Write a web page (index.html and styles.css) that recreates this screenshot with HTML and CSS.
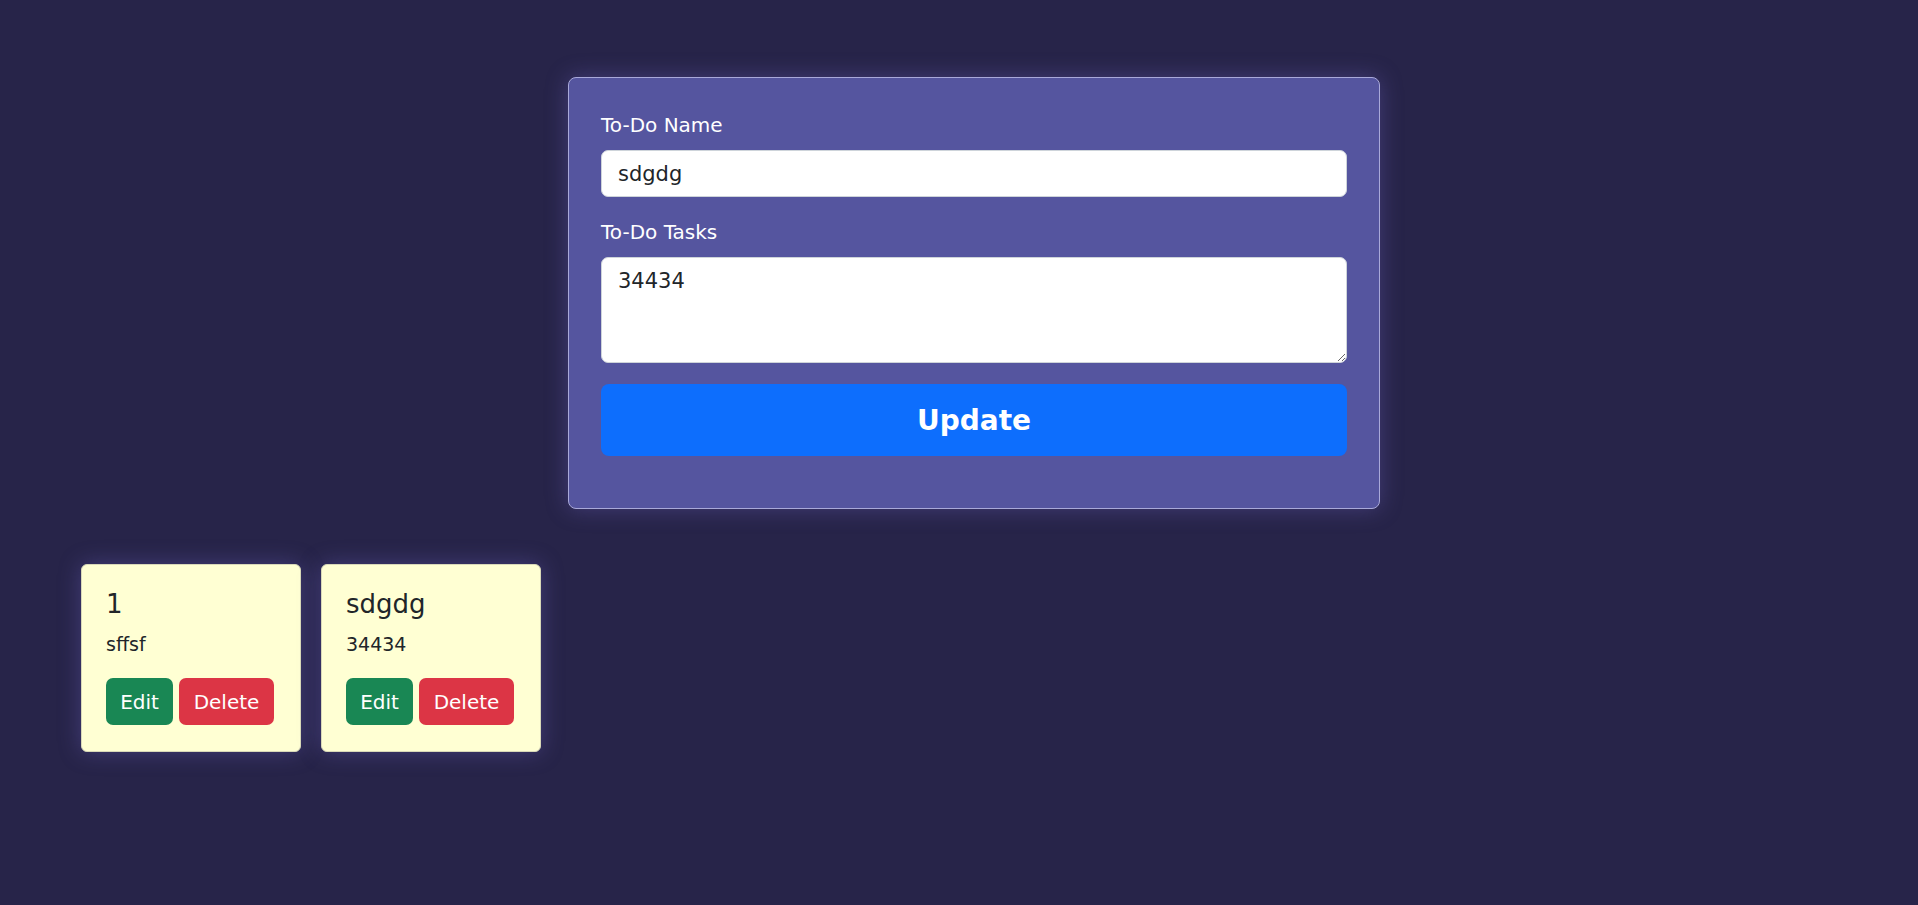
FILE: index.html
```html
<!DOCTYPE html>
<html lang="en">
<head>
<meta charset="utf-8">
<title>To-Do</title>
<link rel="stylesheet" href="styles.css">
</head>
<body>
<main class="page">
  <div class="form-wrap">
    <form class="todo-form">
      <label class="form-label" for="name">To-Do Name</label>
      <input class="form-control" id="name" type="text" value="sdgdg">
      <label class="form-label second" for="tasks">To-Do Tasks</label>
      <textarea class="form-control area" id="tasks">34434</textarea>
      <button type="button" class="btn-update">Update</button>
    </form>
  </div>
  <section class="cards">
    <div class="card">
      <h4 class="card-title">1</h4>
      <p class="card-text">sffsf</p>
      <div class="actions">
        <button type="button" class="btn btn-edit">Edit</button>
        <button type="button" class="btn btn-delete">Delete</button>
      </div>
    </div>
    <div class="card">
      <h4 class="card-title">sdgdg</h4>
      <p class="card-text">34434</p>
      <div class="actions">
        <button type="button" class="btn btn-edit">Edit</button>
        <button type="button" class="btn btn-delete">Delete</button>
      </div>
    </div>
  </section>
</main>
</body>
</html>
```

FILE: styles.css
```css
* { box-sizing: border-box; }
html, body {
  margin: 0;
  padding: 0;
  background: #272449;
  height: 100%;
}
body {
  font-family: "DejaVu Sans", "Open Sans", "Liberation Sans", sans-serif;
  color: #212529;
}
.page {
  padding-top: 77px;
}
.form-wrap {
  padding-left: 568px;
}
.todo-form {
  width: 812px;
  background: #55559f;
  border: 1px solid #a9a9d9;
  border-radius: 8px;
  padding: 32px 32px 52px;
  display: flex;
  flex-direction: column;
  box-shadow: 0 0 22px rgba(120, 110, 210, 0.35);
}
.form-label {
  color: #ffffff;
  font-size: 20px;
  line-height: 30px;
  margin-bottom: 10px;
}
.form-label.second {
  margin-top: 20px;
}
.form-control {
  font-family: inherit;
  font-size: 21px;
  color: #212529;
  background: #fff;
  border: 1px solid #ced4da;
  border-radius: 7px;
  padding: 0 16px;
  height: 47px;
  line-height: 30px;
  width: 100%;
  outline: none;
}
.form-control.area {
  height: 106px;
  padding: 8px 16px;
  resize: vertical;
}
.btn-update {
  margin-top: 21px;
  height: 72px;
  border: 0;
  border-radius: 8px;
  background: #0d6efd;
  color: #fff;
  font-family: inherit;
  font-size: 28px;
  font-weight: 700;
  cursor: pointer;
}
.cards {
  display: flex;
  gap: 20px;
  padding-left: 81px;
  margin-top: 55px;
}
.card {
  width: 220px;
  height: 188px;
  background: #ffffd3;
  border: 1px solid #d8d8b8;
  border-radius: 6px;
  padding: 24px;
  box-shadow: 0 0 22px rgba(120, 110, 210, 0.35);
}
.card-title {
  margin: 0 0 12px;
  font-size: 26px;
  line-height: 30px;
  font-weight: 400;
}
.card-text {
  margin: 0 0 20px;
  font-size: 19px;
  line-height: 27px;
}
.actions {
  display: flex;
  gap: 6px;
}
.btn {
  height: 47px;
  border: 0;
  border-radius: 7px;
  padding: 0;
  font-family: inherit;
  font-size: 20px;
  color: #fff;
  cursor: pointer;
}
.btn-edit { background: #198754; width: 67px; }
.btn-delete { background: #dc3545; width: 95px; }
```
